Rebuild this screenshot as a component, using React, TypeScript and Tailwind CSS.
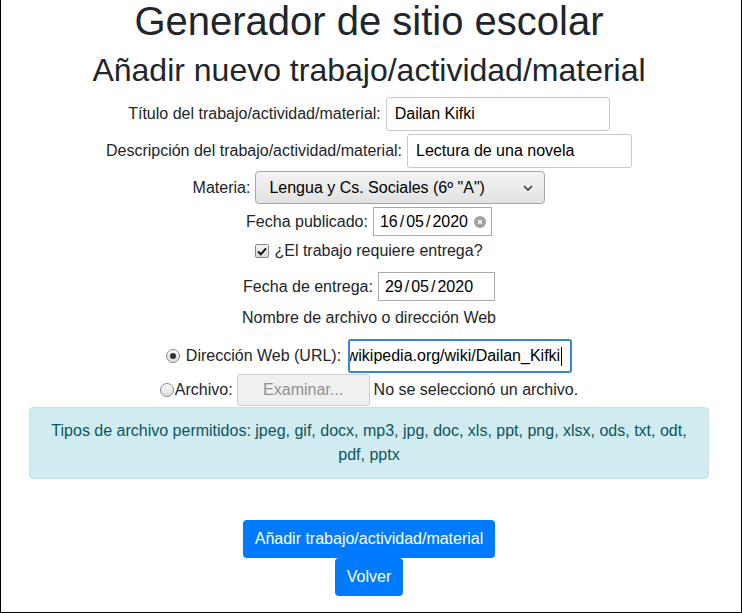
import React from "react";

const font = "font-['Liberation_Sans',Arial,sans-serif]";

const TextBox = ({ value, width }: { value: string; width: string }) => (
  <div className={`${width} h-[34px] border border-[#c9c9c9] rounded-[3px] bg-white flex items-center pl-[8px] text-black`}>
    {value}
  </div>
);

const DateBox = ({ parts, width, clear }: { parts: string[]; width: string; clear?: boolean }) => (
  <div className={`${width} h-[29px] border border-[#a9a9a9] bg-white flex items-center pl-[6px] pr-[5px] text-black`}>
    <span className="flex items-center gap-[2px]">
      <span>{parts[0]}</span>
      <span>/</span>
      <span>{parts[1]}</span>
      <span>/</span>
      <span>{parts[2]}</span>
    </span>
    {clear && (
      <span className="ml-auto w-[12px] h-[12px] rounded-full bg-[#a0a0a0] flex items-center justify-center shrink-0">
        <svg width="6" height="6" viewBox="0 0 6 6">
          <path d="M1 1L5 5M5 1L1 5" stroke="white" strokeWidth="1.4" />
        </svg>
      </span>
    )}
  </div>
);

const Radio = ({ checked }: { checked?: boolean }) => (
  <span className="w-[14px] h-[14px] shrink-0 rounded-full border border-[#8a8a8a] bg-gradient-to-b from-[#fcfcfc] to-[#dcdcdc] flex items-center justify-center">
    {checked && <span className="w-[6px] h-[6px] rounded-full bg-[#333]" />}
  </span>
);

export default function App() {
  return (
    <div className={`${font} w-[742px] h-[613px] border-l border-r border-b border-black bg-white text-[#212529] text-[16px] pl-[28px] pr-[32px]`}>
      <h1 className="text-[40px] leading-[42px] text-center font-normal">Generador de sitio escolar</h1>
      <h2 className="mt-[9px] text-[32px] leading-[38px] text-center font-normal">Añadir nuevo trabajo/actividad/material</h2>

      <div className="mt-[8px] h-[34px] flex items-center justify-center gap-[5px]">
        <span>Título del trabajo/actividad/material:</span>
        <TextBox value="Dailan Kifki" width="w-[224px]" />
      </div>

      <div className="mt-[3px] h-[34px] flex items-center justify-center gap-[5px]">
        <span>Descripción del trabajo/actividad/material:</span>
        <TextBox value="Lectura de una novela" width="w-[225px]" />
      </div>

      <div className="mt-[3px] h-[33px] flex items-center justify-center gap-[5px]">
        <span>Materia:</span>
        <div className="w-[290px] h-[33px] border border-[#a6a6a6] rounded-[4px] bg-gradient-to-b from-[#f4f4f4] to-[#e2e2e2] flex items-center pl-[13px] pr-[11px] text-black">
          <span>Lengua y Cs. Sociales (6º "A")</span>
          <svg className="ml-auto" width="10" height="6" viewBox="0 0 10 6">
            <path d="M1 1L5 5L9 1" fill="none" stroke="#333" strokeWidth="1.6" />
          </svg>
        </div>
      </div>

      <div className="mt-[3px] h-[29px] flex items-center justify-center gap-[5px]">
        <span>Fecha publicado:</span>
        <DateBox parts={["16", "05", "2020"]} width="w-[119px]" clear />
      </div>

      <div className="mt-[3px] h-[24px] flex items-center justify-center gap-[5px]">
        <span className="w-[14px] h-[14px] shrink-0 rounded-[2px] border border-[#8a8a8a] bg-gradient-to-b from-[#f6f6f6] to-[#dadada] flex items-center justify-center">
          <svg width="10" height="9" viewBox="0 0 10 9">
            <path d="M1 4.5L3.8 7.3L9 1.3" fill="none" stroke="#111" strokeWidth="2" />
          </svg>
        </span>
        <span>¿El trabajo requiere entrega?</span>
      </div>

      <div className="mt-[9px] h-[29px] flex items-center justify-center gap-[5px]">
        <span>Fecha de entrega:</span>
        <DateBox parts={["29", "05", "2020"]} width="w-[117px]" />
      </div>

      <div className="mt-[5px] h-[24px] flex items-center justify-center">Nombre de archivo o dirección Web</div>

      <div className="mt-[9px] h-[34px] flex items-center justify-center">
        <Radio checked />
        <span className="ml-[6px]">Dirección Web (URL):</span>
        <div className="ml-[7px] w-[224px] h-[34px] border-2 border-[#3d7fdc] rounded-[3px] bg-white flex items-center justify-end overflow-hidden pr-[8px] text-black">
          <span className="whitespace-nowrap">es.wikipedia.org/wiki/Dailan_Kifki</span>
          <span className="w-px h-[19px] bg-black ml-[1px] shrink-0" />
        </div>
      </div>

      <div className="mt-[1px] h-[32px] flex items-center justify-center">
        <Radio />
        <span className="ml-[1px]">Archivo:</span>
        <div className="ml-[4px] w-[133px] h-[32px] border border-[#cfcfcf] rounded-[3px] bg-[#f0f0f0] text-[#8f8f8f] flex items-center justify-center">
          Examinar...
        </div>
        <span className="ml-[4px]">No se seleccionó un archivo.</span>
      </div>

      <div className="mt-[1px] border border-[#bee5eb] bg-[#d1ecf1] text-[#0c5460] rounded-[4px] px-[20px] py-[11px] leading-[24px] text-center">
        Tipos de archivo permitidos: jpeg, gif, docx, mp3, jpg, doc, xls, ppt, png, xlsx, ods, txt, odt, pdf, pptx
      </div>

      <div className="mt-[41px] flex flex-col items-center">
        <button className="h-[38px] px-[12px] bg-[#007bff] text-white rounded-[4px] leading-[24px]">
          Añadir trabajo/actividad/material
        </button>
        <button className="h-[38px] px-[12px] bg-[#007bff] text-white rounded-[4px] leading-[24px]">Volver</button>
      </div>
    </div>
  );
}
